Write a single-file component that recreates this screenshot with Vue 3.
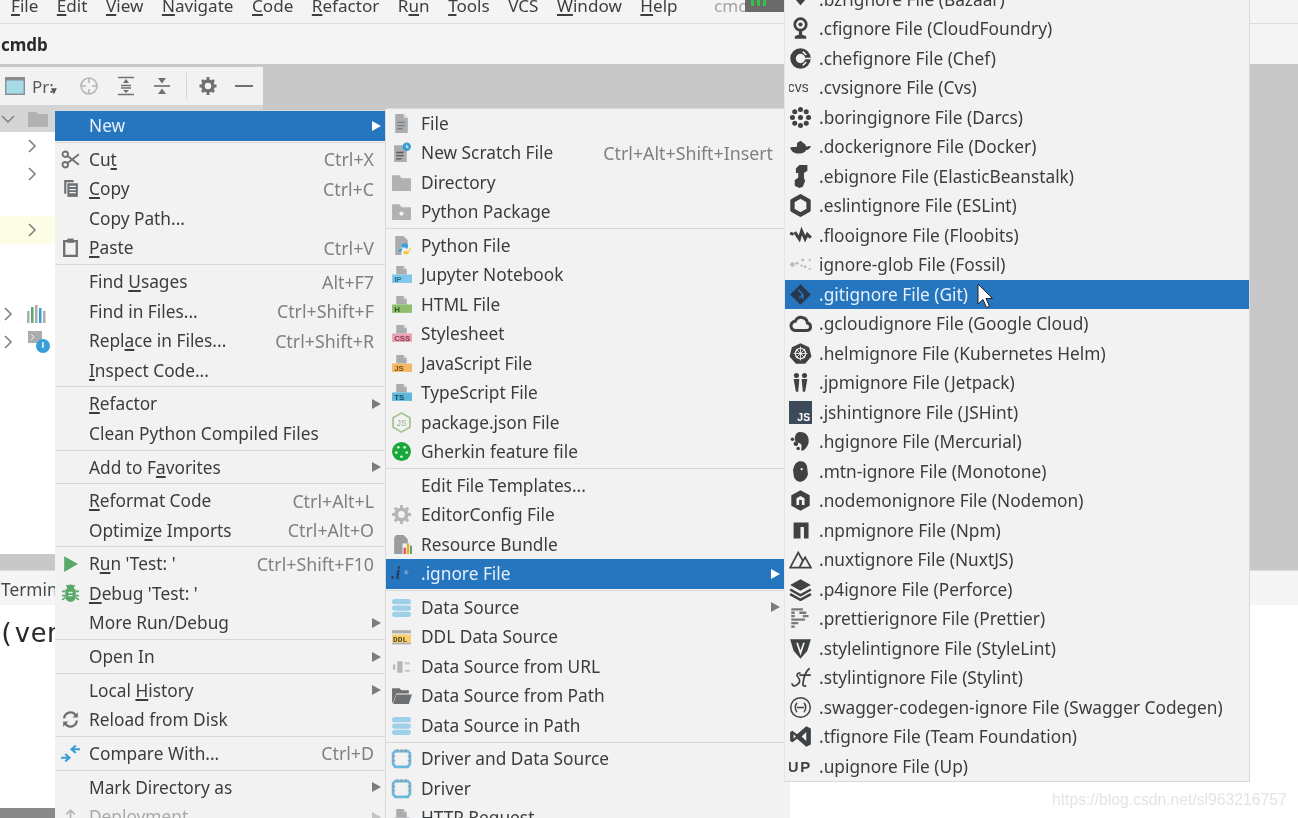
<script setup>
const sep = { sep: true }
const docTop = '<path d="M5 2h7l3 3v5H5z" fill="#a9adb0"/><path d="M12 2l3 3h-3z" fill="#d5d7d8"/>'
const label = (bg, t, fg = '#4a4f52') =>
  docTop + `<rect x="1" y="10" width="19" height="8" fill="${bg}"/><text x="3" y="17" font-family="Liberation Sans" font-weight="700" font-size="7.5" fill="${fg}">${t}</text>`
const dark = '#3f4244'
const icons = {
  cut: `<g fill="none" stroke="#6e7173" stroke-width="1.8"><circle cx="5" cy="5" r="2.6"/><circle cx="5" cy="15" r="2.6"/><path d="M7 6.5 18 15M7 13.5 18 5"/></g>`,
  copy: `<path d="M4 2h9v2H6v11H4z" fill="#6e7173"/><path d="M7 5h10v13H7z" fill="#6e7173"/><path d="M9 8h6M9 11h6M9 14h6" stroke="#f2f2f2" stroke-width="1.2"/>`,
  paste: `<path d="M4 4h12v14H4z" fill="none" stroke="#6e7173" stroke-width="2.2"/><rect x="7" y="1.5" width="6" height="4" fill="#6e7173"/>`,
  run: `<path d="M4 3l13 7.500-13 7.500z" fill="#59a869"/>`,
  bug: `<path d="M5 6h10v7a5 5 0 0 1-10 0z" fill="#59a869"/><circle cx="10" cy="5" r="3.500" fill="#59a869"/><path d="M2 8h3M15 8h3M2 12h3M15 12h3M2 16l3-2M18 16l-3-2M6 2l2 2M14 2l-2 2" stroke="#59a869" stroke-width="1.500"/><path d="M8 9h4M8 12h4" stroke="#f2f2f2" stroke-width="1.300"/>`,
  reload: `<g fill="none" stroke="#6e7173" stroke-width="2.200"><path d="M4 9a6 6 0 0 1 11-3"/><path d="M16 11a6 6 0 0 1-11 3"/></g><path d="M17 3v5h-5zM3 17v-5h5z" fill="#6e7173"/>`,
  compare: `<path d="M1 14h8M5 10.500 9 14l-4 3.500" fill="none" stroke="#389fd6" stroke-width="2"/><path d="M19 6h-8M15 2.500 11 6l4 3.500" fill="none" stroke="#389fd6" stroke-width="2"/>`,
  deploy: `<path d="M10 4v10M6 8l4-4 4 4M3 14v3M17 14v3" fill="none" stroke="#b5b7b8" stroke-width="1.600"/>`,
  file: `<path d="M4 1h8l4 4v14H4z" fill="#a9adb0"/><path d="M12 1l4 4h-4z" fill="#d5d7d8"/><path d="M6 9h7M6 12h7M6 15h5" stroke="#7d8183" stroke-width="1.200"/>`,
  scratch: `<path d="M3 3h8l4 4v12H3z" fill="#a9adb0"/><path d="M5 10h7M5 13h7M5 16h5" stroke="#55595b" stroke-width="1.200"/><circle cx="15" cy="4.500" r="4" fill="#389fd6"/><path d="M15 2.500v2.500h1.500" stroke="#fff" fill="none"/>`,
  folder: `<path d="M1 3h7l2 3h9v12H1z" fill="#afb1b3"/>`,
  pypkg: `<path d="M1 3h7l2 3h9v12H1z" fill="#afb1b3"/><circle cx="10" cy="12" r="2" fill="#f2f2f2"/>`,
  pyfile: `<path d="M4 1h8l4 4v6H10v8H4z" fill="#a9adb0"/><path d="M13 8c-3 0-3 1-3 3v1h4v1H9c-1 0-2 1-2 3h3v-1c0-1 1-2 2-2h3c1 0 1-1 1-2v-1c0-2-1-2-3-2z" fill="#389fd6"/><path d="M18 12c0 3-1 3-2 3h-3c-1 0-1 1-1 1v1c0 2 5 2 5 0v-1h-3v-.500h3c1 0 2-1 2-3z" fill="#f4c82d"/>`,
  jup: label('#7fc6e8', 'IP', '#2a6f96'),
  html: label('#8fbf6e', 'H', '#2e5f1c'),
  css: label('#eaa3b4', 'CSS', '#8a3b50'),
  js: label('#f4b968', 'JS', '#7a4f10'),
  ts: label('#5fb7dc', 'TS', '#134d6c'),
  pkg: `<path d="M10 1l8 4.500v9L10 19l-8-4.500v-9z" fill="none" stroke="#a8c59a" stroke-width="1.800"/><text x="5.500" y="13.500" font-family="Liberation Sans" font-size="8" fill="#8fae80">JS</text>`,
  gherkin: `<circle cx="10" cy="10" r="9" fill="#1aa83c"/><g fill="#d7f5dc"><circle cx="7" cy="6" r="1.300"/><circle cx="13" cy="6" r="1.300"/><circle cx="5" cy="11" r="1.300"/><circle cx="15" cy="11" r="1.300"/><circle cx="10" cy="15" r="1.300"/></g>`,
  gear: `<circle cx="10" cy="10" r="5" fill="none" stroke="#b4b6b8" stroke-width="3.500"/><path d="M10 1v3M10 16v3M1 10h3M16 10h3M3.600 3.600l2 2M14.400 14.400l2 2M3.600 16.400l2-2M14.400 5.600l2-2" stroke="#b4b6b8" stroke-width="2.800"/>`,
  bundle: `<path d="M5 1h7l4 4v4h-5v10H3V3z" fill="#9a9da0"/><rect x="12" y="13" width="2.200" height="6" fill="#e2574c"/><rect x="15" y="9" width="2.200" height="10" fill="#f4a62a"/><rect x="18" y="11" width="2" height="8" fill="#59a869"/>`,
  ignore: `<text x="0" y="15" font-family="Liberation Serif" font-style="italic" font-weight="700" font-size="17" fill="#27415f">.i</text><text x="12" y="15" font-family="Liberation Sans" font-size="13" fill="#8fb4d8">*</text>`,
  db: `<g fill="#9fd0ea"><rect x="1" y="2" width="18" height="5" rx="2.500"/><rect x="1" y="8" width="18" height="5" rx="2.500"/><rect x="1" y="14" width="18" height="5" rx="2.500"/></g>`,
  ddl: `<rect x="1" y="4" width="18" height="3" fill="#a9adb0"/><rect x="1" y="8" width="18" height="8" fill="#f6cf73"/><text x="2" y="15" font-family="Liberation Mono" font-weight="700" font-size="7.500" fill="#5a4a1a">DDL</text><rect x="1" y="16" width="18" height="1.500" fill="#a9adb0"/>`,
  url: `<path d="M2 8h2v5H2zM6 5h5v11H6z" fill="#b4b6b8"/><path d="M13 6h5v2h-5zM13 13h5v2h-5z" fill="#c4c6c8"/>`,
  open: `<path d="M1 3h7l2 2h7v3H5l-3 9H1z" fill="#6e7173"/><path d="M5 9h15l-3 9H2z" fill="#6e7173"/>`,
  driver: `<path d="M4 3h12l2 2v10l-2 3H4l-2-3V5z" fill="none" stroke="#6db7dd" stroke-width="2.600"/><path d="M6 1v3M10 1v3M14 1v3M1 8h3M1 12h3M16 8h3M16 12h3" stroke="#9a9da0" stroke-width="1.200"/>`,
  http: docTop + `<rect x="3" y="10" width="15" height="8" fill="#a9adb0"/>`,
  bz: `<path d="M3 7l7-7 7 7-7 8z" fill="${dark}"/><path d="M10 4l3 3-3 3-3-3z" fill="#f2f2f2"/>`,
  cf: `<circle cx="10" cy="6.500" r="5" fill="none" stroke="${dark}" stroke-width="2.400"/><circle cx="10" cy="6.500" r="1.800" fill="${dark}"/><path d="M10 11v5" stroke="${dark}" stroke-width="2.800"/><path d="M5 17c2-2 8-2 10 0v2H5z" fill="${dark}"/>`,
  chef: `<circle cx="10" cy="10" r="6.500" fill="none" stroke="${dark}" stroke-width="4.800"/><path d="M8 10h11M12 4l3 3M12 16l3-3" stroke="#f2f2f2" stroke-width="1.300"/>`,
  cvs: `<text x="-1" y="14" font-family="Liberation Sans" font-size="12" fill="${dark}">cvs</text>`,
  boring: `<g fill="${dark}"><circle cx="10" cy="10" r="2.200"/><circle cx="10" cy="3" r="2.200"/><circle cx="10" cy="17" r="2.200"/><circle cx="3" cy="10" r="2.200"/><circle cx="17" cy="10" r="2.200"/><circle cx="5" cy="5" r="2.200"/><circle cx="15" cy="5" r="2.200"/><circle cx="5" cy="15" r="2.200"/><circle cx="15" cy="15" r="2.200"/></g>`,
  docker: `<path d="M1 11c3-1 4 0 6-1V7l3-2 4 3 1 2c2 0 3-1 4 0-1 2-2 3-4 3-2 3-4 3-7 3-4 0-6-2-7-5z" fill="${dark}"/>`,
  eb: `<path d="M9 0h7v5l-3 2v4l1 3-2 5-3 1-4-2v-5l3-2V7H6V3z" fill="${dark}"/>`,
  eslint: `<path d="M10 2l7 4v8l-7 4-7-4V6z" fill="none" stroke="${dark}" stroke-width="3.800" stroke-linejoin="round"/>`,
  floo: `<path d="M1 8l3 1M5 7l4 6 2-7 3 7 2-4 3 3" fill="none" stroke="${dark}" stroke-width="2.600"/>`,
  fossil: `<g fill="#b9bbbd"><circle cx="3" cy="10" r="2"/><circle cx="7" cy="9" r="1.300"/><circle cx="12" cy="6" r="1.200"/><circle cx="14" cy="12" r="1.200"/><circle cx="18" cy="6" r="1"/><circle cx="18" cy="14" r="1"/><circle cx="11" cy="11" r="1"/></g>`,
  git: `<path d="M10 1l9 9-9 9-9-9z" fill="#27384f"/><path d="M8 6l4 4v4M12 10l-3 3" stroke="#2675bf" stroke-width="1.400" fill="none"/>`,
  gcloud: `<path d="M6 16a4 4 0 0 1-.5-8 5.500 5.500 0 0 1 10.500 1.500 3.300 3.300 0 0 1 0 6.500z" fill="none" stroke="${dark}" stroke-width="2.600"/>`,
  helm: `<path d="M10 1l7.500 3.500 2 8L14 19H6l-5.500-6.500 2-8z" fill="${dark}"/><circle cx="10" cy="10" r="4.500" fill="none" stroke="#e8e8e8" stroke-width="1.200"/><path d="M10 4v12M4 10h12M6 6l8 8M14 6l-8 8" stroke="#e8e8e8" stroke-width=".8"/>`,
  jp: `<g fill="${dark}"><circle cx="6.500" cy="4" r="2.200"/><circle cx="13.500" cy="4" r="2.200"/><path d="M4 7h5l-1 11H6zM11 7h5l-2 11h-2z"/></g>`,
  jshint: `<rect x="0" y="0" width="22" height="22" fill="#3d4a5a"/><text x="8" y="19" font-family="Liberation Sans" font-weight="700" font-size="10" fill="#fff">JS</text>`,
  hg: `<path d="M8 2c6-1 10 3 9 9-1 4-4 7-6 7-1-2 1-4-1-6s-5-1-5-4 1-5 3-6z" fill="${dark}"/><circle cx="6" cy="12" r="2" fill="${dark}"/><circle cx="3" cy="8" r="1.500" fill="${dark}"/><circle cx="8" cy="16" r="1.500" fill="${dark}"/>`,
  mtn: `<path d="M10 1c4 0 6 3 6 7 0 2 1 4 0 6-1 3-4 5-6 5-3 0-6-3-6-6s-1-4 0-6c1-4 3-6 6-6z" fill="${dark}"/><circle cx="11" cy="8" r="1" fill="#f2f2f2"/>`,
  nodemon: `<path d="M10 1l8 4.500v9L10 19l-8-4.500v-9z" fill="${dark}"/><path d="M6.500 14V8L10 6l3.500 2v6h-2.300V9.500h-2.400V14z" fill="#f2f2f2"/>`,
  npm: `<path d="M4 3h13v14h-4V7h-3v10H4z" fill="${dark}"/>`,
  nuxt: `<path d="M1 17L8 4l4 7-3 6zM9 17l5-9 5 9z" fill="none" stroke="${dark}" stroke-width="1.500"/>`,
  p4: `<path d="M10 1l9 5-9 5-9-5z" fill="${dark}"/><path d="M1 10l9 5 9-5M1 14l9 5 9-5" fill="none" stroke="${dark}" stroke-width="2.200"/>`,
  prettier: `<g stroke="#77797b" stroke-width="2"><path d="M2 2h10M2 5h3M9 5h6M2 8h3M12 8h5M2 11h12M2 14h6M2 17h3"/></g>`,
  stylelint: `<path d="M1 2h18l-3 10-6 7-6-7z" fill="${dark}"/><path d="M7 5l3 9 3-9" fill="none" stroke="#f2f2f2" stroke-width="1.500"/>`,
  stylus: `<path d="M10 6c-3 0-4 2-2 4s2 5-2 7c-2 1-4-1-3-2M18 2c-3 2-5 6-6 14 0 1 1 2 3 1M9 8h10" fill="none" stroke="${dark}" stroke-width="1.500"/>`,
  swagger: `<circle cx="10" cy="10" r="8.500" fill="none" stroke="${dark}" stroke-width="1.300"/><path d="M7 6c-2 2-2 6 0 8M13 6c2 2 2 6 0 8M7 10h6" fill="none" stroke="${dark}" stroke-width="1.300"/>`,
  tf: `<path d="M1 6l2-1 4 3 8-7 4 2v14l-4 2-8-7-4 3-2-1zM4 8v4l2-2zM15 6l-4 4 4 4z" fill="${dark}" fill-rule="evenodd"/>`,
  up: `<text x="-1" y="15" font-family="Liberation Sans" font-weight="700" letter-spacing="1.500" font-size="13" fill="${dark}">UP</text>`
}

const m1 = [
  { l: 'New', arrow: true, active: true }, sep,
  { l: 'Cu_t', s: 'Ctrl+X', i: 'cut' }, { l: '_Copy', s: 'Ctrl+C', i: 'copy' }, { l: 'Copy Path...' },
  { l: '_Paste', s: 'Ctrl+V', i: 'paste' }, sep,
  { l: 'Find _Usages', s: 'Alt+F7' }, { l: 'Find in Files...', s: 'Ctrl+Shift+F' },
  { l: 'Repl_ace in Files...', s: 'Ctrl+Shift+R' }, { l: '_Inspect Code...' }, sep,
  { l: '_Refactor', arrow: true }, { l: 'Clean Python Compiled Files' }, sep,
  { l: 'Add to F_avorites', arrow: true }, sep,
  { l: '_Reformat Code', s: 'Ctrl+Alt+L' }, { l: 'Optimi_ze Imports', s: 'Ctrl+Alt+O' }, sep,
  { l: 'R_un \'Test: \'', s: 'Ctrl+Shift+F10', i: 'run' }, { l: '_Debug \'Test: \'', i: 'bug' },
  { l: 'More Run/Debug', arrow: true }, sep,
  { l: 'Open In', arrow: true }, sep,
  { l: 'Local _History', arrow: true }, { l: 'Reload from Disk', i: 'reload' }, sep,
  { l: 'Compare With...', s: 'Ctrl+D', i: 'compare' }, sep,
  { l: 'Mark Directory as', arrow: true },
  { l: 'Deployment', arrow: true, i: 'deploy', off: true }
]
const m2 = [
  { l: 'File', i: 'file' }, { l: 'New Scratch File', s: 'Ctrl+Alt+Shift+Insert', i: 'scratch' },
  { l: 'Directory', i: 'folder' }, { l: 'Python Package', i: 'pypkg' }, sep,
  { l: 'Python File', i: 'pyfile' }, { l: 'Jupyter Notebook', i: 'jup' }, { l: 'HTML File', i: 'html' },
  { l: 'Stylesheet', i: 'css' }, { l: 'JavaScript File', i: 'js' }, { l: 'TypeScript File', i: 'ts' },
  { l: 'package.json File', i: 'pkg' }, { l: 'Gherkin feature file', i: 'gherkin' }, sep,
  { l: 'Edit File Templates...' }, { l: 'EditorConfig File', i: 'gear' }, { l: 'Resource Bundle', i: 'bundle' },
  { l: '.ignore File', i: 'ignore', arrow: true, active: true }, sep,
  { l: 'Data Source', i: 'db', arrow: true }, { l: 'DDL Data Source', i: 'ddl' },
  { l: 'Data Source from URL', i: 'url' }, { l: 'Data Source from Path', i: 'open' },
  { l: 'Data Source in Path', i: 'db' }, sep,
  { l: 'Driver and Data Source', i: 'driver' }, { l: 'Driver', i: 'driver' }, { l: 'HTTP Request', i: 'http' }
]
const m3 = [
  ['.bzrignore File (Bazaar)', 'bz'], ['.cfignore File (CloudFoundry)', 'cf'], ['.chefignore File (Chef)', 'chef'],
  ['.cvsignore File (Cvs)', 'cvs'], ['.boringignore File (Darcs)', 'boring'], ['.dockerignore File (Docker)', 'docker'],
  ['.ebignore File (ElasticBeanstalk)', 'eb'], ['.eslintignore File (ESLint)', 'eslint'], ['.flooignore File (Floobits)', 'floo'],
  ['ignore-glob File (Fossil)', 'fossil'], ['.gitignore File (Git)', 'git', true], ['.gcloudignore File (Google Cloud)', 'gcloud'],
  ['.helmignore File (Kubernetes Helm)', 'helm'], ['.jpmignore File (Jetpack)', 'jp'], ['.jshintignore File (JSHint)', 'jshint'],
  ['.hgignore File (Mercurial)', 'hg'], ['.mtn-ignore File (Monotone)', 'mtn'], ['.nodemonignore File (Nodemon)', 'nodemon'],
  ['.npmignore File (Npm)', 'npm'], ['.nuxtignore File (NuxtJS)', 'nuxt'], ['.p4ignore File (Perforce)', 'p4'],
  ['.prettierignore File (Prettier)', 'prettier'], ['.stylelintignore File (StyleLint)', 'stylelint'],
  ['.stylintignore File (Stylint)', 'stylus'], ['.swagger-codegen-ignore File (Swagger Codegen)', 'swagger'],
  ['.tfignore File (Team Foundation)', 'tf'], ['.upignore File (Up)', 'up']
].map(([l, i, active]) => ({ l, i, active }))

const menus = [
  { cls: 'm1', items: m1 },
  { cls: 'm2', items: m2 },
  { cls: 'm3', items: m3 }
]
const parts = (l) => {
  const k = l.indexOf('_')
  return k < 0 ? [l, '', ''] : [l.slice(0, k), l[k + 1], l.slice(k + 2)]
}
const menubar = ['_File', '_Edit', '_View', '_Navigate', '_Code', '_Refactor', 'R_un', '_Tools', 'VCS', '_Window', '_Help']
const treeRows = [
  { y: 'plain', chev: true }, { y: 'plain', chev: true }, { y: 'plain' }, { y: 'warm', chev: true },
  { y: 'plain' }, { y: 'plain' }, { y: 'plain', chev: true, i: 'bars' }, { y: 'plain', chev: true, i: 'term' }
]
</script>

<template>
  <div class="app">
    <header class="menubar">
      <span v-for="m in menubar" :key="m" class="mb-item">{{ parts(m)[0] }}<u>{{ parts(m)[1] }}</u>{{ parts(m)[2] }}</span>
      <span class="proj-title">cmd</span>
      <span class="proj-tag"><i></i><i></i><i></i></span>
    </header>
    <div class="titlebar"><b>cmdb</b></div>
    <main class="workspace">
      <div class="toolbar">
        <svg class="tb-win" width="20" height="18" viewBox="0 0 20 18"><rect x=".7" y=".7" width="18.600" height="16.600" fill="#a8dbe8" stroke="#8a8d90" stroke-width="1.400"/><rect x="1" y="1" width="18" height="2.500" fill="#8a8d90"/></svg>
        <span class="tb-name">Pr:<em>▼</em></span>
        <svg class="tb-i tb-faint" width="20" height="20" viewBox="0 0 20 20"><circle cx="10" cy="10" r="8" fill="none" stroke="#6e7173" stroke-width="1.600"/><path d="M10 2v5M10 13v5M2 10h5M13 10h5" stroke="#6e7173" stroke-width="1.600"/></svg>
        <svg class="tb-i" width="20" height="20" viewBox="0 0 20 20"><path d="M2 1.500h16M2 18.500h16M5 9.500h10M5 12h10" stroke="#6e7173" stroke-width="1.700"/><path d="M10 3l3 4H7zM10 17l-3-3h6z" fill="#6e7173"/></svg>
        <svg class="tb-i" width="20" height="20" viewBox="0 0 20 20"><path d="M2 10h16" stroke="#6e7173" stroke-width="1.700"/><path d="M10 7.500 6 2h8zM10 12.500l4 5.500H6z" fill="#6e7173"/></svg>
        <span class="tb-sep"></span>
        <svg class="tb-i" width="20" height="20" viewBox="0 0 20 20"><circle cx="10" cy="10" r="5" fill="none" stroke="#6e7173" stroke-width="3.600"/><path d="M10 1v3M10 16v3M1.500 10h3M15.500 10h3M4 4l2 2M14 14l2 2M4 16l2-2M14 6l2-2" stroke="#6e7173" stroke-width="2.800"/></svg>
        <svg class="tb-i" width="18" height="20" viewBox="0 0 18 20"><path d="M0 10h18" stroke="#6e7173" stroke-width="2"/></svg>
      </div>
      <div class="tree">
        <div class="tree-head">
          <svg width="16" height="16" viewBox="0 0 16 16"><path d="M2 5l6 6 6-6" fill="none" stroke="#7a7c7e" stroke-width="1.400"/></svg>
          <svg class="tree-folder" width="20" height="16" viewBox="0 0 20 16"><path d="M0 1h8l2 2h10v13H0z" fill="#afb1b3"/></svg>
        </div>
        <div v-for="(r, n) in treeRows" :key="n" class="tree-row" :class="r.y">
          <svg v-if="r.chev" class="chev" width="12" height="16" viewBox="0 0 12 16"><path d="M3 2l6 6-6 6" fill="none" stroke="#7a7c7e" stroke-width="1.500"/></svg>
          <svg v-if="r.i === 'bars'" width="20" height="20" viewBox="0 0 20 20"><rect x="0" y="7" width="2.500" height="12" fill="#a9adb0"/><rect x="4" y="3" width="2.500" height="16" fill="#59a869"/><rect x="8" y="1" width="2.500" height="18" fill="#a9adb0"/><rect x="12" y="4" width="2.500" height="15" fill="#389fd6"/><rect x="16" y="7" width="2.500" height="12" fill="#a9adb0"/></svg>
          <svg v-if="r.i === 'term'" width="24" height="24" viewBox="0 0 24 24"><rect x="1" y="1" width="14" height="12" fill="#a9adb0"/><path d="M4 4l3 3-3 3" stroke="#f2f2f2" fill="none"/><circle cx="16" cy="16" r="7" fill="#389fd6"/><path d="M16 12v5h-1" stroke="#fff" fill="none" stroke-width="1.400"/></svg>
        </div>
      </div>
    </main>
    <section class="terminal">
      <div class="term-tab">Terminal</div>
      <div class="term-out">(venv)</div>
      <div class="term-foot"></div>
    </section>

    <nav v-for="menu in menus" :key="menu.cls" class="menu" :class="menu.cls">
      <template v-for="(it, n) in menu.items" :key="n">
        <div v-if="it.sep" class="sep"></div>
        <div v-else class="row" :class="{ active: it.active, off: it.off }">
          <span class="ico"><svg v-if="it.i" :width="it.i === 'jshint' ? 22 : 21" :height="it.i === 'jshint' ? 22 : 21" :viewBox="it.i === 'jshint' ? '0 0 22 22' : '0 0 20 20'" v-html="icons[it.i]"></svg></span>
          <span class="lab">{{ parts(it.l)[0] }}<u>{{ parts(it.l)[1] }}</u>{{ parts(it.l)[2] }}</span>
          <span v-if="it.s" class="sc">{{ it.s }}</span>
          <span v-if="it.arrow" class="arr"></span>
        </div>
      </template>
    </nav>

    <svg class="cursor" width="18" height="26" viewBox="0 0 18 26"><path d="M1 1v20l5-4.500 3.500 8 3-1.300-3.500-7.700h6.500z" fill="#fff" stroke="#222" stroke-width="1"/></svg>
    <div class="mark">https://blog.csdn.net/sl963216757</div>
  </div>
</template>

<style>
html, body { margin: 0; background: #fff; }
</style>

<style scoped>
.app {
  position: relative;
  width: 1298px;
  height: 818px;
  overflow: hidden;
  background: #fff;
  display: flex;
  flex-direction: column;
  font-family: "Noto Sans", "Open Sans", sans-serif;
  color: #3c3f41;
  filter: blur(0.35px);
}
u { text-underline-offset: 2px; text-decoration-thickness: 1.500px; }

.menubar {
  height: 23px;
  flex: none;
  background: #f4f4f4;
  border-bottom: 1px solid #dcdcdc;
  display: flex;
  align-items: center;
  padding-left: 11px;
  font-size: 17.100px;
  gap: 18.500px;
  box-sizing: content-box;
  white-space: nowrap;
}
.mb-item { position: relative; top: -6px; }
.proj-title { margin-left: 18px; color: #a2a2a2; position: relative; top: -6px; }
.proj-tag {
  position: absolute; left: 745px; top: 0; width: 40px; height: 12px;
  background: #6a6a6a; display: flex; gap: 3px; padding: 0 6px; box-sizing: border-box;
}
.proj-tag i { width: 3px; height: 6px; background: #35c24a; }

.titlebar {
  height: 40px; flex: none; background: #f4f4f4;
  display: flex; align-items: center; padding-left: 1px; font-size: 17px; color: #2b2b2b;
}
.workspace { height: 506px; flex: none; background: #c9c8c9; }
.toolbar {
  margin-top: 3px; height: 38px; width: 263px; background: #f2f2f2;
  display: flex; align-items: center; padding-left: 5px; box-sizing: border-box;
}
.tb-win { margin-right: 7px; flex: none; }
.tb-name { font-size: 17px; width: 47px; flex: none; position: relative; color: #55585a; }
.tb-name em { position: absolute; left: 17px; top: 8px; font-size: 10px; font-style: normal; }
.tb-i { margin-right: 16.500px; flex: none; }
.tb-faint { opacity: .45; }
.tb-sep { width: 1px; height: 26px; background: #d6d6d6; margin: 0 11px 0 -2.500px; flex: none; }
.tree { width: 263px; background: #fff; height: 449px; }
.tree-head { height: 27px; background: #d5d5d5; display: flex; align-items: center; gap: 12px; }
.tree-row { height: 28px; display: flex; align-items: center; gap: 13px; padding-left: 26px; }
.tree-row:nth-child(n+8) { padding-left: 2px; }
.tree-row.warm { background: #fdfde6; }

.terminal { flex: 1; display: flex; flex-direction: column; background: #fff; }
.term-tab { height: 35px; background: #f5f5f5; border-top: 1px solid #dcdcdc; font-size: 17.300px; line-height: 38px; padding-left: 1px; color: #45484a; box-sizing: border-box; }
.term-out { font-family: "DejaVu Sans Mono", monospace; font-size: 27px; line-height: 56px; color: #2a2a2a; flex: 1; margin-left: -2px; }
.term-foot { height: 10px; width: 55px; background: #8a8a8a; }

.menu {
  position: absolute;
  background: #f2f2f2;
  box-sizing: border-box;
  border: 1px solid #d9d9d9;
  font-size: 17.300px;
  color: #3a3d3f;
  padding: 0;
}
.m1 { --pad: 34px; --sr: 11px; --ar: 4.500px; --sg: 4.200px; left: 55px; top: 110px; width: 331px; border-width: 1px 1px 0 0; }
.m2 { --pad: 35px; --sr: 17px; --ar: 10.500px; --sg: 4px; left: 386px; top: 107.500px; width: 404px; border-width: 1px 0 0 0; }
.m3 { --pad: 34px; --sr: 10px; --ar: 5px; --sg: 4px; left: 785px; top: -15.500px; width: 465px; border-width: 0 1px 1px 0; box-shadow: -1px 0 0 #e6e6e6; }
.m3 .ico svg { width: 23px; height: 23px; }
.row {
  position: relative; height: 29.500px; display: flex; align-items: center;
  padding-right: var(--sr); white-space: nowrap;
}
.row.active { background: #2675bf; color: #e8f1fa; }
.row.off { color: #a9a9a9; }
.ico { width: var(--pad); flex: none; padding-right: 4px; box-sizing: border-box; display: flex; justify-content: center; align-items: center; }
.ico svg { display: block; }
.sc { margin-left: auto; color: #808080; font-size: 17.800px; }
.arr {
  position: absolute; right: var(--ar); top: 50%; margin-top: -5px;
  border-left: 9px solid #7c7c7c; border-top: 5px solid transparent; border-bottom: 5px solid transparent;
}
.active .arr { border-left-color: #fff; }
.off .arr { border-left-color: #c4c4c4; }
.sep { height: var(--sg); position: relative; }
.sep::after { content: ""; position: absolute; left: 0; right: 0; top: 1.500px; height: 1px; background: #d8d8d8; }

.cursor { position: absolute; left: 977px; top: 283px; }
.mark {
  position: absolute; left: 1052px; top: 791px;
  font-family: "Liberation Sans", sans-serif; font-size: 15.700px; color: #e4e4e4;
}
</style>
